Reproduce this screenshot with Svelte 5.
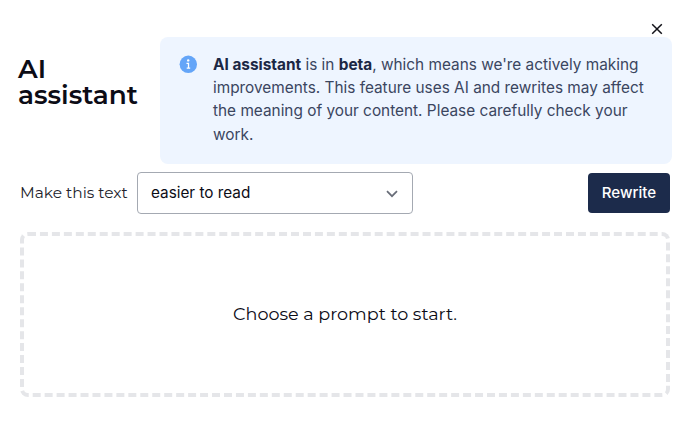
<script>
  let prompt = $state('easier to read');
</script>

<main class="dialog">
  <button class="close" aria-label="Close">
    <svg width="12" height="12" viewBox="0 0 12 12"><path d="M1.2 1.2 10.8 10.8M10.8 1.2 1.2 10.8" fill="none" stroke="#111118" stroke-width="1.5" /></svg>
  </button>
  <header>
    <h1>AI<br />assistant</h1>
    <div class="notice">
      <svg class="info" width="18" height="18" viewBox="0 0 18 18">
        <circle cx="9.3" cy="9.3" r="8.7" fill="#64a5f8" />
        <circle cx="9.2" cy="5.4" r="1.2" fill="#fff" />
        <path d="M7.5 8.3h2V13M7.7 13.1h3.5" fill="none" stroke="#fff" stroke-width="1.3" />
      </svg>
      <p><b>AI assistant</b> is in <b>beta</b>, which means we're actively making<br />improvements. This feature uses AI and rewrites may affect<br />the meaning of your content. Please carefully check your<br />work.</p>
    </div>
  </header>
  <div class="controls">
    <span class="label">Make this text</span>
    <button class="select">
      <span>{prompt}</span>
      <svg width="12" height="8" viewBox="0 0 12 8"><path d="M1 1.2 6 6.2 11 1.2" fill="none" stroke="#686d78" stroke-width="1.7" /></svg>
    </button>
    <button class="rewrite">Rewrite</button>
  </div>
  <section class="result"><span>Choose a prompt to start.</span></section>
</main>

<style>
  :global(body) { background: #fff; }
  .dialog { box-sizing: border-box; width: 688px; height: 432px; padding: 23px 16px 0 18px; display: flex; flex-direction: column; overflow: hidden; font-family: Inter, sans-serif; color: #0c0c16; }
  button { font: inherit; margin: 0; padding: 0; border: 0; background: none; color: inherit; }
  .close { align-self: flex-end; display: flex; width: 12px; height: 12px; margin-right: 9px; }
  header { display: flex; margin-top: 2px; height: 126.5px; }
  h1 { width: 142px; flex: none; margin: 19px 0 0; font: 600 26.3px/26px Montserrat, Inter, sans-serif; white-space: nowrap; }
  .notice { box-sizing: border-box; flex: 1; display: flex; padding: 16px 0 0 19px; background: #eef5ff; border-radius: 8px; }
  .info { flex: none; margin: 2px 16px 0 0; }
  p { margin: 0; font-size: 15.36px; line-height: 23.2px; color: #3b465f; white-space: nowrap; }
  b { font-weight: 700; color: #1b2745; }
  .controls { display: flex; align-items: center; height: 42px; margin: 8.5px 2px 0 2px; }
  .label { width: 117px; padding-bottom: 2px; font-family: Montserrat, Inter, sans-serif; font-size: 15.4px; font-weight: 400; white-space: nowrap; color: #22232b; }
  .select { box-sizing: border-box; width: 276px; height: 42px; padding: 0 14px 0 13px; display: flex; align-items: center; justify-content: space-between; border: 1px solid #a4a9b2; border-radius: 4px; font-size: 15.3px; }
  .select span { padding-bottom: 2px; }
  .select svg { margin-top: 2px; }
  .rewrite { box-sizing: border-box; width: 82px; height: 40px; padding-bottom: 2px; margin-left: auto; background: #1c2b4b; border-radius: 4px; color: #fff; font-size: 15.1px; font-weight: 500; }
  .result { box-sizing: border-box; width: 650px; height: 165px; margin: 18px 0 0 2px; padding-bottom: 2px; display: flex; align-items: center; justify-content: center; border: 4px dashed #e5e6e9; border-radius: 8px; font-family: Montserrat, Inter, sans-serif; font-size: 17.6px; }
</style>
